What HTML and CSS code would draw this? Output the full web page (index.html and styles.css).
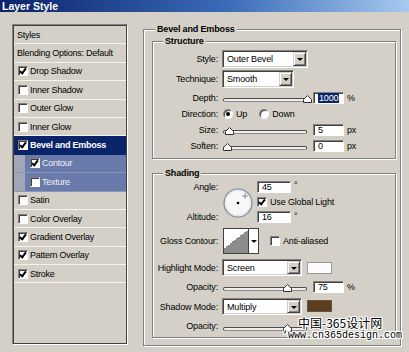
FILE: index.html
```html
<!DOCTYPE html>
<html lang="en">
<head>
<meta charset="UTF-8">
<meta name="viewport" content="width=device-width, initial-scale=1.0">
<title>Layer Style</title>
<link rel="stylesheet" href="styles.css">
</head>
<body>
<div id="dialog">
    <div class="titlebar">Layer Style</div>
    <div class="content">
        <div class="style-list">
            <div class="item">Styles</div>
            <div class="item">Blending Options: Default</div>
            <div class="item"><span class="check on"></span>Drop Shadow</div>
            <div class="item"><span class="check"></span>Inner Shadow</div>
            <div class="item"><span class="check"></span>Outer Glow</div>
            <div class="item"><span class="check"></span>Inner Glow</div>
            <div class="item selected"><span class="check on"></span>Bevel and Emboss</div>
            <div class="item sub"><span class="check on"></span>Contour</div>
            <div class="item sub"><span class="check"></span>Texture</div>
            <div class="item"><span class="check"></span>Satin</div>
            <div class="item"><span class="check"></span>Color Overlay</div>
            <div class="item"><span class="check on"></span>Gradient Overlay</div>
            <div class="item"><span class="check on"></span>Pattern Overlay</div>
            <div class="item"><span class="check on"></span>Stroke</div>
        </div>

        <div class="group outer">
            <div class="group-title">Bevel and Emboss</div>

            <div class="group structure">
                <div class="group-title">Structure</div>
                <div class="form">
                    <div class="label">Style:</div>
                    <div class="ctrl"><div class="select wide"><span>Outer Bevel</span><span class="arrow"></span></div></div>

                    <div class="label">Technique:</div>
                    <div class="ctrl"><div class="select narrow"><span>Smooth</span><span class="arrow"></span></div></div>

                    <div class="label">Depth:</div>
                    <div class="ctrl">
                        <div class="slider"><div class="track"></div><svg class="thumb" style="left: 80px" width="9" height="8"><path d="M.5 7.5v-3l4-4 4 4v3z" fill="#fff" stroke="#333"/></svg></div>
                        <div class="field"><span class="sel">1000</span></div><span class="unit">%</span>
                    </div>

                    <div class="label">Direction:</div>
                    <div class="ctrl">
                        <span class="radio on"></span><span class="opt">Up</span>
                        <span class="radio"></span><span class="opt">Down</span>
                    </div>

                    <div class="label">Size:</div>
                    <div class="ctrl">
                        <div class="slider"><div class="track"></div><svg class="thumb" style="left: 2px" width="9" height="8"><path d="M.5 7.5v-3l4-4 4 4v3z" fill="#fff" stroke="#333"/></svg></div>
                        <div class="field">5</div><span class="unit">px</span>
                    </div>

                    <div class="label">Soften:</div>
                    <div class="ctrl">
                        <div class="slider"><div class="track"></div><svg class="thumb" style="left: 0px" width="9" height="8"><path d="M.5 7.5v-3l4-4 4 4v3z" fill="#fff" stroke="#333"/></svg></div>
                        <div class="field">0</div><span class="unit">px</span>
                    </div>
                </div>
            </div>

            <div class="group shading">
                <div class="group-title">Shading</div>
                <div class="form">
                    <div class="label">Angle:</div>
                    <div class="dial">
                        <svg width="30" height="30" viewBox="0 0 30 30">
                            <circle cx="15" cy="15" r="14" fill="#f7f7f7" stroke="#7d8696" stroke-width="1.2"/>
                            <circle cx="15" cy="15" r="12.6" fill="none" stroke="#dde2ea" stroke-width="1"/>
                            <circle cx="15" cy="15" r="1.3" fill="#000"/>
                            <path d="M22 5.5v5M19.5 8h5" stroke="#333" stroke-width="1" stroke-dasharray="1 1"/>
                        </svg>
                    </div>
                    <div class="ctrl"><div class="field long">45</div><span class="deg">°</span></div>

                    <div class="ctrl col3"><span class="check on"></span><span>Use Global Light</span></div>

                    <div class="label">Altitude:</div>
                    <div class="ctrl col3"><div class="field long">16</div><span class="deg">°</span></div>

                    <div class="label">Gloss Contour:</div>
                    <div class="ctrl span2">
                        <div class="contour">
                            <svg width="24" height="24" viewBox="0 0 24 24">
                                <path d="M0 24V19h2v-2h2v-1h2v-2h2v-2h2v-1h2V9h2V8h2V6h2V5h2V3h2V2h2v22z" fill="#8c8c8c"/>
                            </svg>
                            <span class="drop"></span>
                        </div>
                        <span class="check"></span><span>Anti-aliased</span>
                    </div>

                    <div class="label">Highlight Mode:</div>
                    <div class="ctrl span2">
                        <div class="select mode"><span>Screen</span><span class="arrow"></span></div>
                        <span class="swatch"></span>
                    </div>

                    <div class="label">Opacity:</div>
                    <div class="ctrl span2">
                        <div class="slider"><div class="track"></div><svg class="thumb" style="left: 60px" width="9" height="8"><path d="M.5 7.5v-3l4-4 4 4v3z" fill="#fff" stroke="#333"/></svg></div>
                        <div class="field">75</div><span class="unit">%</span>
                    </div>

                    <div class="label">Shadow Mode:</div>
                    <div class="ctrl span2">
                        <div class="select mode"><span>Multiply</span><span class="arrow"></span></div>
                        <span class="swatch brown"></span>
                    </div>

                    <div class="label">Opacity:</div>
                    <div class="ctrl span2">
                        <div class="slider"><div class="track"></div><svg class="thumb" style="left: 60px" width="9" height="8"><path d="M.5 7.5v-3l4-4 4 4v3z" fill="#fff" stroke="#333"/></svg></div>
                    </div>
                </div>
            </div>
        </div>
    </div>

    <div class="watermark">
        <div class="wm-cn">中国-365设计网</div>
        <div class="wm-url">‘www.cn365design.com</div>
    </div>
</div>
</body>
</html>
```

FILE: styles.css
```css
body {
    margin: 0;
    padding: 0;
    background: #d4d0c8;
    font-family: "Liberation Sans", Arial, sans-serif;
    font-size: 9px;
    letter-spacing: -0.15px;
    color: #000;
}
#dialog {
    position: relative;
    width: 409px;
    height: 352px;
    overflow: hidden;
    background: #d4d0c8;
}
.titlebar {
    height: 12px;
    line-height: 12px;
    padding-left: 2px;
    background: linear-gradient(to right, #0a246a, #3a6ab8 55%, #a6caf0);
    color: #fff;
    font-size: 10.5px;
    font-weight: bold;
    letter-spacing: 0;
}
.content {
    display: flex;
    align-items: flex-start;
}

/* left list */
.style-list {
    margin: 12px 0 0 12px;
    width: 116px;
    height: 321px;
    box-sizing: border-box;
    padding: 1px;
    border: 1px solid;
    border-color: #808080 #fff #fff #808080;
    box-shadow: inset 0 0 0 1px #404040;
    letter-spacing: -0.25px;
}
.item {
    height: 18.4px;
    box-sizing: border-box;
    border-bottom: 1px solid #f4f3ef;
    display: flex;
    align-items: center;
    padding-left: 4px;
    white-space: nowrap;
}
.item .check {
    margin-right: 2px;
}
.item:first-child,
.item:nth-child(2) {
    padding-left: 3px;
}
.item.selected {
    background: #0a246a;
    color: #fff;
    font-weight: bold;
    border-bottom-color: #0a246a;
}
.item.sub {
    padding-left: 16px;
    color: #f0f0f4;
    background: linear-gradient(to right, #a2a7b8 11px, #6a7aaa 11px);
    border-bottom-color: #8a96bc;
}

/* checkboxes and radios */
.check,
.radio {
    position: relative;
    flex: none;
    width: 10px;
    height: 10px;
    box-sizing: border-box;
    background: #fff;
    border: 1px solid;
    border-color: #808080 #fff #fff #808080;
    box-shadow: inset 1px 1px 0 #404040;
    margin-right: 3px;
}
.check.on::after {
    content: "";
    position: absolute;
    left: 2px;
    top: 0;
    width: 2px;
    height: 5px;
    border: solid #000;
    border-width: 0 2px 2px 0;
    transform: rotate(38deg);
}
.radio {
    border-radius: 50%;
    margin-left: 1px;
}
.radio.on::after {
    content: "";
    position: absolute;
    left: 2px;
    top: 2px;
    width: 4px;
    height: 4px;
    border-radius: 50%;
    background: #000;
}
.opt {
    margin-right: 11px;
}

/* group boxes */
.group {
    border: 1px solid #808080;
    box-shadow: inset 1px 1px 0 #fff, 1px 1px 0 #fff;
}
.group-title {
    width: fit-content;
    margin-top: -6px;
    padding: 0 2px;
    line-height: 11px;
    background: #d4d0c8;
    font-weight: bold;
}
.outer {
    margin: 17px 0 0 15px;
    width: 258px;
    box-sizing: border-box;
}
.outer > .group-title {
    margin-left: 11px;
}
.structure,
.shading {
    margin: 6px 4px 0 8px;
}
.structure > .group-title,
.shading > .group-title {
    margin-left: 10px;
}
.structure {
    padding-bottom: 4px;
}
.shading {
    margin-top: 14px;
    margin-bottom: 7px;
    padding-bottom: 3px;
}
.form {
    display: grid;
    align-items: center;
}
.structure .form {
    margin-top: 1px;
    grid-template-columns: 69px 1fr;
    grid-template-rows: 21px 20px 17px 16px 15px 17px;
}
.shading .form {
    grid-template-columns: 69px 35px 1fr;
    grid-template-rows: 15px 15px 16px 32px 21px 17px 23px 16px;
}
.label {
    grid-column: 1;
    text-align: right;
    padding-right: 4px;
    white-space: nowrap;
}
.ctrl {
    display: flex;
    align-items: center;
    white-space: nowrap;
}
.span2 {
    grid-column: 2 / 4;
}
.col3 {
    grid-column: 3;
}
.dial {
    grid-column: 2;
    grid-row: 1 / 4;
    align-self: start;
    margin: 9px 0 0 1px;
    height: 30px;
}
.dial svg {
    display: block;
}

/* dropdowns */
.select {
    display: flex;
    align-items: center;
    height: 18px;
    box-sizing: border-box;
    background: #fff;
    border: 1px solid;
    border-color: #808080 #fff #fff #808080;
    box-shadow: inset 1px 1px 0 #404040, inset -1px -1px 0 #d4d0c8;
    padding: 1px 1px 1px 4px;
}
.select.wide {
    width: 86px;
}
.select.narrow {
    width: 72px;
}
.select.mode {
    width: 80px;
    height: 17px;
}
.arrow {
    position: relative;
    margin-left: auto;
    width: 13px;
    align-self: stretch;
    box-sizing: border-box;
    background: #d4d0c8;
    border: 1px solid;
    border-color: #d4d0c8 #404040 #404040 #d4d0c8;
    box-shadow: inset 1px 1px 0 #fff, inset -1px -1px 0 #808080;
}
.arrow::after,
.drop::after {
    content: "";
    position: absolute;
    left: 50%;
    top: 50%;
    margin: -1px 0 0 -3px;
    border: 3px solid transparent;
    border-top: 3px solid #000;
    border-bottom: 0;
}

/* sliders and fields */
.slider {
    position: relative;
    flex: none;
    width: 84px;
    height: 8px;
    margin: 3px 0 0 1px;
}
.track {
    margin-top: 3px;
    height: 2px;
    border: 1px solid #4a4a4a;
    border-bottom-color: #8a8a8a;
    border-radius: 2px;
    background: #efefef;
}
.thumb {
    position: absolute;
    top: 0;
    display: block;
}
.field {
    flex: none;
    width: 31px;
    height: 12px;
    box-sizing: border-box;
    margin-left: 6px;
    padding: 1px 0 0 4px;
    line-height: 9px;
    background: #fff;
    border: 1px solid;
    border-color: #808080 #fff #fff #808080;
    box-shadow: inset 1px 1px 0 #404040;
}
.field.long {
    width: 34px;
    margin-left: 0;
}
.sel {
    background: #0a246a;
    color: #fff;
    padding: 0 1px;
}
.unit {
    margin-left: 3px;
}
.deg {
    margin-left: 3px;
    margin-top: -3px;
}

/* gloss contour picker */
.contour {
    display: flex;
    height: 26px;
    box-sizing: border-box;
    background: #fff;
    border: 1px solid #404040;
    margin-left: 1px;
    margin-right: 11px;
}
.contour svg {
    display: block;
}
.drop {
    position: relative;
    width: 9px;
    border-left: 1px solid #404040;
}

/* colour swatches */
.swatch {
    width: 25px;
    height: 12px;
    box-sizing: border-box;
    margin-left: 5px;
    border: 1px solid #9a9a9a;
    background: #fcfcfc;
}
.swatch.brown {
    margin-top: -2px;
    background: #5c3d1e;
    border-color: #6a5440;
}

/* site watermark over the dialog */
.watermark {
    position: absolute;
    left: 282px;
    top: 315px;
    color: #000;
    letter-spacing: 0;
    text-shadow: 1px 0 #fff, -1px 0 #fff, 0 1px #fff, 0 -1px #fff,
                 1px 1px #fff, -1px -1px #fff, 1px -1px #fff, -1px 1px #fff;
}
.wm-cn {
    margin-left: 16px;
    font-family: "Noto Sans CJK SC", sans-serif;
    font-size: 12px;
    line-height: 15px;
}
.wm-url {
    font-family: "Liberation Mono", monospace;
    font-size: 10px;
    line-height: 11px;
}
```
